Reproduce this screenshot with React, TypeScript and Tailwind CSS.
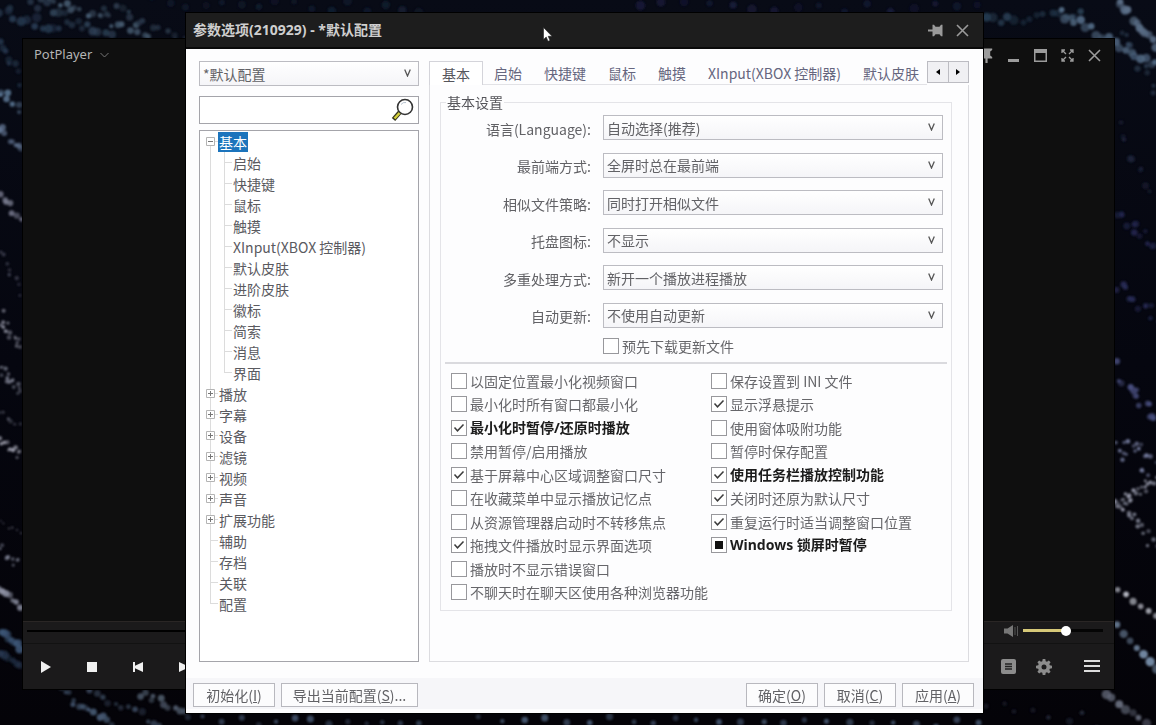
import { clsx } from "clsx";
import { ReactNode, useState } from "react";

type TreeNode = { label: string; children?: string[]; expandable?: boolean };
type Option = { label: string; checked?: boolean; bold?: boolean; mixed?: boolean };

const TREE: TreeNode[] = [
  {
    label: "基本",
    expandable: true,
    children: [
      "启始",
      "快捷键",
      "鼠标",
      "触摸",
      "XInput(XBOX 控制器)",
      "默认皮肤",
      "进阶皮肤",
      "徽标",
      "简索",
      "消息",
      "界面",
    ],
  },
  { label: "播放", expandable: true },
  { label: "字幕", expandable: true },
  { label: "设备", expandable: true },
  { label: "滤镜", expandable: true },
  { label: "视频", expandable: true },
  { label: "声音", expandable: true },
  { label: "扩展功能", expandable: true },
  { label: "辅助" },
  { label: "存档" },
  { label: "关联" },
  { label: "配置" },
];

const TABS = ["基本", "启始", "快捷键", "鼠标", "触摸", "XInput(XBOX 控制器)", "默认皮肤"];

const FIELDS = [
  { id: "language", label: "语言(Language):", value: "自动选择(推荐)" },
  { id: "topmost", label: "最前端方式:", value: "全屏时总在最前端" },
  { id: "similar", label: "相似文件策略:", value: "同时打开相似文件" },
  { id: "tray", label: "托盘图标:", value: "不显示" },
  { id: "multi", label: "多重处理方式:", value: "新开一个播放进程播放" },
  { id: "update", label: "自动更新:", value: "不使用自动更新" },
];

const OPTIONS: Option[] = [
  { label: "以固定位置最小化视频窗口" },
  { label: "最小化时所有窗口都最小化" },
  { label: "最小化时暂停/还原时播放", checked: true, bold: true },
  { label: "禁用暂停/启用播放" },
  { label: "基于屏幕中心区域调整窗口尺寸", checked: true },
  { label: "在收藏菜单中显示播放记忆点" },
  { label: "从资源管理器启动时不转移焦点" },
  { label: "拖拽文件播放时显示界面选项", checked: true },
  { label: "播放时不显示错误窗口" },
  { label: "不聊天时在聊天区使用各种浏览器功能" },
  { label: "保存设置到 INI 文件" },
  { label: "显示浮悬提示", checked: true },
  { label: "使用窗体吸附功能" },
  { label: "暂停时保存配置" },
  { label: "使用任务栏播放控制功能", checked: true, bold: true },
  { label: "关闭时还原为默认尺寸", checked: true },
  { label: "重复运行时适当调整窗口位置", checked: true },
  { label: "Windows 锁屏时暂停", mixed: true, bold: true },
];

// x1, y1, x2, y2, number of dots, radius, spread, colour
const STREAKS: [number, number, number, number, number, number, number, string][] = [
  [0, 8, 60, 34, 12, 4, 8, "#26384f"],
  [30, 0, 110, 36, 16, 4, 6, "#2f4257"],
  [50, 0, 150, 34, 20, 3, 5, "#465b70"],
  [100, 8, 185, 34, 14, 3, 8, "#2b3a4c"],
  [150, 2, 420, 8, 16, 4, 6, "#121c30"],
  [640, 4, 980, 8, 16, 4, 6, "#161a38"],
  [985, 22, 1080, 12, 14, 4, 5, "#24394d"],
  [1060, 12, 1156, 66, 20, 4, 4, "#526a84"],
  [1118, 0, 1156, 46, 14, 4, 5, "#5c7089"],
  [1120, 30, 1156, 90, 10, 3, 6, "#33455c"],
  [1118, 130, 1156, 200, 10, 3, 8, "#1b2138"],
  [1118, 210, 1156, 250, 12, 3, 8, "#20244a"],
  [1120, 285, 1156, 315, 12, 3, 8, "#2a2e5a"],
  [1118, 370, 1156, 420, 14, 3, 10, "#474d7c"],
  [1118, 440, 1156, 470, 20, 2, 14, "#737a9c"],
  [1116, 508, 1156, 478, 26, 2, 6, "#a0a3b4"],
  [1116, 500, 1156, 545, 16, 2, 7, "#7d8191"],
  [1118, 590, 1156, 616, 6, 3, 1, "#b8bac4"],
  [1116, 626, 1156, 668, 7, 4, 2, "#7389a3"],
  [1106, 692, 1146, 724, 7, 4, 3, "#64697a"],
  [0, 40, 20, 80, 8, 3, 6, "#23344a"],
  [0, 88, 20, 112, 8, 3, 5, "#5c7896"],
  [0, 128, 20, 152, 8, 3, 4, "#647794"],
  [0, 196, 20, 216, 7, 3, 4, "#7d7f94"],
  [0, 250, 20, 290, 8, 2, 6, "#4a4c5e"],
  [0, 316, 20, 346, 14, 2, 8, "#8b8d9c"],
  [0, 370, 20, 392, 16, 2, 6, "#757888"],
  [0, 412, 20, 424, 6, 2, 3, "#5a5c6b"],
  [0, 442, 20, 454, 12, 2, 5, "#9798a6"],
  [0, 520, 20, 536, 6, 1, 3, "#5d5f6e"],
  [0, 550, 18, 566, 8, 2, 6, "#7f8496"],
  [0, 590, 20, 604, 7, 3, 4, "#9094a6"],
  [0, 632, 20, 648, 10, 4, 3, "#3d5677"],
  [0, 652, 20, 664, 6, 4, 3, "#26364f"],
  [60, 692, 110, 724, 14, 3, 5, "#445770"],
  [90, 694, 160, 724, 12, 3, 5, "#364356"],
  [140, 694, 184, 712, 10, 3, 4, "#4b5666"],
  [186, 720, 420, 724, 14, 3, 4, "#3c4a61"],
  [480, 718, 980, 724, 24, 3, 4, "#43536c"],
  [985, 700, 1100, 722, 8, 3, 8, "#232838"],
];

const noise = (n: number) => {
  const v = Math.sin(n * 127.1) * 43758.5453;
  return v - Math.floor(v);
};

const Wallpaper = () => (
  <svg
    aria-hidden="true"
    viewBox="0 0 1156 725"
    preserveAspectRatio="none"
    className="absolute inset-0 h-full w-full"
  >
    <defs>
      <linearGradient id="sky" x1="0" y1="0" x2="0" y2="1">
        <stop offset="0" stopColor="#080b16" />
        <stop offset="0.5" stopColor="#05060f" />
        <stop offset="1" stopColor="#040308" />
      </linearGradient>
      <filter id="soft">
        <feGaussianBlur stdDeviation="1.1" />
      </filter>
    </defs>
    <rect width="1156" height="725" fill="url(#sky)" />
    <g filter="url(#soft)">
      {STREAKS.map(([x1, y1, x2, y2, count, r, spread, fill], s) =>
        Array.from({ length: count }, (_, i) => {
          const seed = s * 61 + i * 3 + 1;
          const t = i / Math.max(1, count - 1);
          return (
            <circle
              key={`${s}-${i}`}
              cx={x1 + (x2 - x1) * t + (noise(seed) - 0.5) * spread}
              cy={y1 + (y2 - y1) * t + (noise(seed + 1) - 0.5) * spread * 2}
              r={r * (0.7 + noise(seed + 2) * 0.5)}
              fill={fill}
              opacity={0.45 + noise(seed + 5) * 0.55}
            />
          );
        }),
      )}
    </g>
  </svg>
);

const IconButton = ({
  label,
  className,
  children,
}: {
  label: string;
  className?: string;
  children: ReactNode;
}) => (
  <button
    type="button"
    aria-label={label}
    className={clsx("flex h-6 items-center justify-center", className)}
  >
    {children}
  </button>
);

const CloseIcon = () => (
  <svg width="13" height="13" viewBox="0 0 13 13" stroke="currentColor" strokeWidth="1.6">
    <path d="M1 1 12 12M12 1 1 12" />
  </svg>
);

const PinIcon = ({ className }: { className?: string }) => (
  <svg width="15" height="13" viewBox="0 0 15 13" fill="currentColor" className={className}>
    <path d="M0 5.400h4.500V0.800h1.500l1.500 2h4l1.500-2h1.500v11.400h-1.500l-1.500-2h-4l-1.500 2H4.500V7.600H0z" />
  </svg>
);

const Player = () => (
  <main className="absolute top-[38px] right-[41px] bottom-[35px] left-[22px] flex flex-col border border-black bg-[#0f0f0f] font-['Noto_Sans','Noto_Sans_CJK_SC',sans-serif]">
    <header className="flex h-8 items-center justify-between pr-[6px] pl-[11px] text-[#9c9c9c]">
      <button type="button" className="flex items-center gap-2 text-[13px] text-[#b4b4b4]">
        PotPlayer
        <svg width="9" height="6" viewBox="0 0 9 6" fill="none" stroke="#777">
          <path d="M0.5 1 4.5 5 8.5 1" />
        </svg>
      </button>
      <div className="flex">
        <IconButton label="置顶" className="w-[27px]">
          <PinIcon className="-rotate-90" />
        </IconButton>
        <IconButton label="最小化" className="w-[27px]">
          <svg width="13" height="13" viewBox="0 0 13 13" fill="currentColor">
            <path d="M1 10h11v3H1z" />
          </svg>
        </IconButton>
        <IconButton label="最大化" className="w-[27px]">
          <svg width="13" height="13" viewBox="0 0 13 13" fill="currentColor">
            <path fillRule="evenodd" d="M0 0h13v13H0zM1.5 4v7.5h10V4z" />
          </svg>
        </IconButton>
        <IconButton label="全屏" className="w-[27px]">
          <svg
            width="13"
            height="13"
            viewBox="0 0 13 13"
            fill="none"
            stroke="currentColor"
            strokeWidth="1.3"
          >
            <path d="M1 4V1h3M9 1h3v3M12 9v3H9M4 12H1V9M1 1l4 4M12 1 8 5M12 12 8 8M1 12l4-4" />
          </svg>
        </IconButton>
        <IconButton label="关闭" className="w-[27px]">
          <CloseIcon />
        </IconButton>
      </div>
    </header>
    <div className="flex-1" />
    <footer className="bg-[#1b1a1b]">
      <div className="flex h-[22px] items-center gap-[30px] border-t border-[#2a2625] pr-[11px] pb-1 pl-1">
        <input
          type="range"
          aria-label="进度"
          defaultValue={50}
          className="h-[2px] flex-1 appearance-none bg-black [&::-webkit-slider-thumb]:appearance-none"
        />
        <div className="flex items-center gap-1">
          <svg width="16" height="12" viewBox="0 0 16 12" fill="#777">
            <path d="M1 3.5h3.5L10 0v12L4.500 8.500H1z" />
            <path d="M11.500 2h1v8h-1zM14 1h1v10h-1z" fill="#555" />
          </svg>
          <input
            type="range"
            aria-label="音量"
            defaultValue={54}
            className="h-[3px] w-20 appearance-none bg-[linear-gradient(to_right,#d6c878_54%,#050505_54%)] [&::-webkit-slider-thumb]:size-[10px] [&::-webkit-slider-thumb]:appearance-none [&::-webkit-slider-thumb]:rounded-full [&::-webkit-slider-thumb]:bg-white"
          />
        </div>
      </div>
      <div className="flex h-[46px] items-center justify-between border-t border-[#121212] pr-[14px]">
        <div className="flex text-[#f0f0f0]">
          <IconButton label="播放" className="w-[46px]">
            <svg width="10" height="12" viewBox="0 0 10 12" fill="currentColor">
              <path d="M0 0 10 6 0 12z" />
            </svg>
          </IconButton>
          <IconButton label="停止" className="w-[46px]">
            <svg width="10" height="10" fill="currentColor">
              <rect width="10" height="10" />
            </svg>
          </IconButton>
          <IconButton label="上一个" className="w-[46px]">
            <svg width="10" height="10" viewBox="0 0 10 10" fill="currentColor">
              <path d="M0 0h2v3.800L10 0v10L2 6.200V10H0z" />
            </svg>
          </IconButton>
          <IconButton label="下一个" className="w-[46px]">
            <svg width="10" height="10" viewBox="0 0 10 10" fill="currentColor">
              <path d="M0 0 8 3.800V0h2v10H8V6.200L0 10z" />
            </svg>
          </IconButton>
        </div>
        <div className="flex items-center text-[#8c8c8c]">
          <IconButton label="播放列表">
            <svg width="15" height="15" viewBox="0 0 15 15">
              <rect width="15" height="15" rx="2" fill="currentColor" />
              <path d="M4 5h7M4 7.500h7M4 10h7" stroke="#222" strokeWidth="1.300" />
            </svg>
          </IconButton>
          <IconButton label="设置" className="ml-5">
            <svg width="16" height="16" viewBox="0 0 16 16" fill="currentColor">
              <path
                fillRule="evenodd"
                d="M6.700 0h2.600l.4 2.200 1.300.5L12.800 1.400l1.800 1.800L13.300 5l.5 1.300 2.200.4v2.600l-2.200.4-.5 1.300 1.300 1.800-1.800 1.800-1.800-1.300-1.300.5-.4 2.200H6.700l-.4-2.200-1.300-.5-1.800 1.300-1.800-1.800L2.700 11l-.5-1.300L0 9.300V6.700l2.200-.4L2.700 5 1.400 3.200l1.800-1.800L5 2.700l1.300-.5zM8 5.500a2.500 2.500 0 1 0 0 5 2.500 2.500 0 0 0 0-5z"
              />
            </svg>
          </IconButton>
          <IconButton label="菜单" className="ml-8 text-[#dcdcdc]">
            <svg width="16" height="13" viewBox="0 0 16 13" fill="currentColor">
              <path d="M0 0h16v2H0zM0 5h16v2H0zM0 10h16v2H0z" />
            </svg>
          </IconButton>
        </div>
      </div>
    </footer>
  </main>
);

const Select = ({ id, value, label }: { id: string; value: string; label?: string }) => (
  <div className="relative min-w-0 flex-1">
    <select
      id={id}
      aria-label={label}
      className="block h-[25px] w-full appearance-none border border-[#bcbcc2] bg-linear-to-b from-white to-[#f5f5f8] pl-[3px] text-[#626266]"
    >
      <option>{value}</option>
    </select>
    <svg
      width="7"
      height="8"
      viewBox="0 0 7 8"
      fill="none"
      stroke="#555"
      strokeWidth="1.300"
      className="pointer-events-none absolute top-2 right-2"
    >
      <path d="M0.700 0.500 3.500 7 6.300 0.500" />
    </svg>
  </div>
);

const Checkbox = ({ label, checked, bold, mixed }: Option) => (
  <label
    className={clsx(
      "flex items-center gap-[3px] whitespace-nowrap",
      bold
        ? "font-['Noto_Sans','Noto_Sans_CJK_SC',sans-serif] font-bold text-[#1c1c1c]"
        : "text-[#66666a]",
    )}
  >
    <span className="relative size-4 shrink-0">
      <input
        type="checkbox"
        defaultChecked={checked}
        className="peer block size-4 appearance-none border border-[#98989c] bg-white"
      />
      <svg
        viewBox="0 0 16 16"
        fill="none"
        stroke="#3c3c3c"
        strokeWidth="1.500"
        className="pointer-events-none absolute inset-0 hidden peer-checked:block"
      >
        <path d="M3.500 7.500 6.500 10.800 12.500 4.500" />
      </svg>
      {mixed && <span className="pointer-events-none absolute inset-1 bg-[#111]" />}
    </span>
    {label}
  </label>
);

const Guide = ({
  first,
  last,
  expander,
}: {
  first?: boolean;
  last?: boolean;
  expander?: "+" | "-";
}) => (
  <span className="relative flex h-[21px] w-2 shrink-0 flex-col">
    <span
      className={clsx("h-[11px] border-b border-[#dcdcdc]", !first && "border-l")}
    />
    <span className={clsx("flex-1 border-[#dcdcdc]", !last && "border-l")} />
    {expander && (
      <button
        type="button"
        aria-label={expander === "+" ? "展开" : "折叠"}
        className="absolute top-[6px] -left-1"
      >
        <svg width="9" height="9" viewBox="0 0 9 9" fill="none" className="block">
          <path d="M.5.5h8v8h-8z" fill="#fff" stroke="#b4b4b4" />
          <path d={expander === "+" ? "M2 4.500h5M4.500 2v5" : "M2 4.500h5"} stroke="#777" />
        </svg>
      </button>
    )}
  </span>
);

const Tree = () => {
  const [active, setActive] = useState("基本");

  const item = (label: string) => (
    <button
      type="button"
      onClick={() => setActive(label)}
      className={clsx(
        "h-5 px-px whitespace-nowrap",
        active === label && "bg-[#1c74bc] text-white",
      )}
    >
      {label}
    </button>
  );

  return (
    <nav className="flex-1 border border-[#a4a4aa] bg-white pb-px pl-[10px] text-[#5a5a5f]">
      <ul>
        {TREE.map((node, i) => (
          <li key={node.label}>
            <div className="flex items-center">
              <Guide
                first={i === 0}
                last={i === TREE.length - 1}
                expander={node.expandable ? (node.children ? "-" : "+") : undefined}
              />
              {item(node.label)}
            </div>
            {node.children && (
              <ul className="border-l border-[#dcdcdc] pl-[13px]">
                {node.children.map((child, j) => (
                  <li key={child} className="flex items-center">
                    <Guide last={j === node.children!.length - 1} />
                    {item(child)}
                  </li>
                ))}
              </ul>
            )}
          </li>
        ))}
      </ul>
    </nav>
  );
};

const Tabs = () => {
  const [tab, setTab] = useState(0);

  return (
    <div className="flex h-6 shrink-0">
      <div className="flex min-w-0 flex-1 overflow-hidden" role="tablist">
        {TABS.map((label, i) => (
          <button
            key={label}
            type="button"
            role="tab"
            aria-selected={tab === i}
            onClick={() => setTab(i)}
            className={clsx(
              "shrink-0 whitespace-nowrap",
              tab === i
                ? "border-x border-t border-[#d4d4da] bg-white px-3 text-[#55555c]"
                : "border-b border-[#e2e2e6] px-[11px] text-[#66667e]",
            )}
          >
            {label}
          </button>
        ))}
        <span className="flex-1 border-b border-[#e2e2e6]" />
      </div>
      <div className="flex h-[22px] w-[42px] border border-[#bcbcc2] bg-[#f0f0f3]">
        <IconButton label="向左" className="h-full flex-1 border-r border-[#bcbcc2]">
          <svg width="4" height="6" viewBox="0 0 4 6">
            <path d="M4 0v6L0 3z" />
          </svg>
        </IconButton>
        <IconButton label="向右" className="h-full flex-1">
          <svg width="4" height="6" viewBox="0 0 4 6">
            <path d="M0 0v6l4-3z" />
          </svg>
        </IconButton>
      </div>
    </div>
  );
};

const DialogButton = ({
  text,
  mnemonic,
  suffix = ")",
  className,
}: {
  text: string;
  mnemonic: string;
  suffix?: string;
  className: string;
}) => (
  <button
    type="button"
    className={clsx(
      "h-6 border border-[#b8b8be] bg-[#fcfcfd] whitespace-nowrap text-[#626266]",
      className,
    )}
  >
    {text}(<u>{mnemonic}</u>
    {suffix}
  </button>
);

const Preferences = () => (
  <section
    aria-labelledby="dialog-title"
    className="absolute top-[12px] right-[172px] bottom-[11px] left-[185px] flex flex-col border border-black bg-[#fdfdfe] font-['Noto_Sans_CJK_SC','Noto_Sans',sans-serif] text-[14px] leading-5"
  >
    <header className="flex h-9 shrink-0 items-center justify-between border-b-2 border-[#0a0a0a] bg-[#1d1d1d] pr-[7px] pl-[7px] text-[#9a9a9a]">
      <h1
        id="dialog-title"
        className="font-['Noto_Sans','Noto_Sans_CJK_SC',sans-serif] text-[14px] font-bold text-[#cfcfcf]"
      >
        参数选项(210929) - *默认配置
      </h1>
      <div className="flex">
        <IconButton label="固定" className="w-[27px]">
          <PinIcon />
        </IconButton>
        <IconButton label="关闭" className="w-[27px]">
          <CloseIcon />
        </IconButton>
      </div>
    </header>

    <div className="flex min-h-0 flex-1 gap-[10px] pt-3 pr-[14px] pb-4 pl-[13px]">
      <div className="flex w-[220px] shrink-0 flex-col">
        <div className="flex">
          <Select id="profile" value="*默认配置" label="配置" />
        </div>
        <div className="relative mt-[10px] mb-[6px]">
          <input
            type="text"
            aria-label="搜索"
            className="block h-7 w-full border border-[#a4a4aa] bg-white pr-8 pl-1"
          />
          <svg
            width="24"
            height="24"
            viewBox="0 0 24 24"
            fill="none"
            className="absolute top-[2px] right-1"
          >
            <path d="M9 14 2.500 21.500" stroke="#33331a" strokeWidth="4.500" />
            <path d="M9 14.500 3.500 20.500" stroke="#d4d03c" strokeWidth="2.500" />
            <circle cx="14" cy="9" r="7.500" fill="#fff" stroke="#333" strokeWidth="1.600" />
            <path d="M10 6.500a5 5 0 0 1 5-2" stroke="#b8c4d0" />
          </svg>
        </div>
        <Tree />
      </div>

      <div className="flex min-w-0 flex-1 flex-col">
        <Tabs />
        <div className="flex-1 border-x border-b border-[#dcdce0] pt-2 pr-4 pl-[10px]">
          <fieldset className="min-w-0 border border-[#e4e4e8] pb-[6px]">
            <legend className="ml-[5px] px-px leading-[18px] text-[#55555a]">基本设置</legend>
            <div className="mt-1 flex h-[213px] flex-col justify-between pr-2">
              {FIELDS.map((field) => (
                <div key={field.id} className="flex items-center gap-3">
                  <label
                    htmlFor={field.id}
                    className="w-[150px] shrink-0 pt-[2px] text-right text-[#626266]"
                  >
                    {field.label}
                  </label>
                  <Select id={field.id} value={field.value} />
                </div>
              ))}
            </div>
            <div className="mt-2 flex pl-[162px]">
              <Checkbox label="预先下载更新文件" />
            </div>
            <hr className="mx-1 mt-[6px] mb-[5px] border-t-2 border-[#dadade]" />
            <div className="grid h-[235px] grid-flow-col grid-cols-[260px_1fr] grid-rows-10 pl-[10px]">
              {OPTIONS.map((option) => (
                <Checkbox key={option.label} {...option} />
              ))}
            </div>
          </fieldset>
        </div>
      </div>
    </div>

    <footer className="flex shrink-0 justify-between border-b-4 border-[#fdfdfe] bg-[#f6f6f9] pt-[5px] pr-[9px] pb-[2px] pl-[7px]">
      <div className="flex gap-[6px]">
        <DialogButton text="初始化" mnemonic="I" className="w-[82px]" />
        <DialogButton text="导出当前配置" mnemonic="S" suffix=")..." className="w-[137px]" />
      </div>
      <div className="flex gap-[6px]">
        <DialogButton text="确定" mnemonic="O" className="w-[72px]" />
        <DialogButton text="取消" mnemonic="C" className="w-[72px]" />
        <DialogButton text="应用" mnemonic="A" className="w-[72px]" />
      </div>
    </footer>
  </section>
);

export default function App() {
  return (
    <div className="relative h-screen overflow-hidden bg-[#05060f]">
      <Wallpaper />
      <Player />
      <Preferences />
      <svg
        aria-hidden="true"
        width="10"
        height="15"
        viewBox="0 0 10 15"
        className="pointer-events-none absolute top-[27px] left-[543px]"
      >
        <path
          d="M.5.500v12l2.700-2.500 1.800 4.300 2-.9-1.800-4.100h3.800z"
          fill="#fff"
          stroke="#222"
          strokeWidth=".6"
        />
      </svg>
    </div>
  );
}
